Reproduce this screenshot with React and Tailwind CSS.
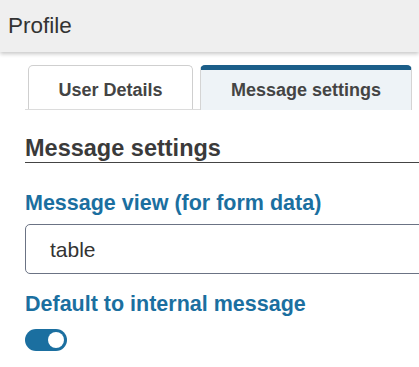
import { useState } from 'react';

const font = { fontFamily: '"Liberation Sans", Arial, sans-serif' };

function Tab({ label, active }) {
  if (active) {
    return (
      <div className="-mb-px flex h-[45px] w-[212px] justify-center rounded-t-[5px] border-x border-t-[5px] border-x-[#d4d4d4] border-t-[#1b5e89] bg-[#eef3f7] pt-[11px]">
        <span className="text-[18px] font-bold leading-[18px] text-[#444]">{label}</span>
      </div>
    );
  }
  return (
    <div className="flex h-[44px] w-[165px] justify-center rounded-t-[5px] border-x border-t border-[#cfcfcf] bg-white pt-[15px]">
      <span className="text-[18px] font-bold leading-[18px] text-[#444]">{label}</span>
    </div>
  );
}

export default function App() {
  const [internal, setInternal] = useState(true);

  return (
    <div className="h-screen w-screen overflow-hidden bg-white" style={font}>
      <header className="flex h-[52px] items-center bg-[#efefef] px-[8px] shadow-[0_2px_4px_rgba(0,0,0,0.22)]">
        <h1 className="text-[22.5px] leading-none text-[#333]">Profile</h1>
      </header>

      <main className="w-[470px] pl-[25px] pt-[13px]">
        <div className="flex w-[387px] items-end gap-[7px] border-b border-[#dcdcdc] pl-[3px]">
          <Tab label="User Details" />
          <Tab label="Message settings" active />
        </div>

        <h2 className="mt-[25px] border-b border-[#444] text-[23.5px] font-bold leading-[27px] text-[#3a3a3a]">
          Message settings
        </h2>

        <label className="mt-[28px] block text-[21.5px] font-bold leading-[24px] text-[#1b6fa0]">
          Message view (for form data)
        </label>
        <div className="mt-[9px] flex h-[50px] items-center rounded-[5px] border border-[#6b7384] px-6">
          <span className="text-[21px] leading-none text-[#333]">table</span>
        </div>

        <label className="mt-[18px] block text-[21.5px] font-bold leading-[24px] text-[#1b6fa0]">
          Default to internal message
        </label>
        <button
          type="button"
          onClick={() => setInternal(!internal)}
          className={`mt-[13px] flex h-[22px] w-[42px] items-center rounded-full px-[3px] ${internal ? 'justify-end bg-[#1b6fa0]' : 'justify-start bg-[#bbb]'}`}
        >
          <span className="h-[16px] w-[16px] rounded-full bg-white" />
        </button>
      </main>
    </div>
  );
}
